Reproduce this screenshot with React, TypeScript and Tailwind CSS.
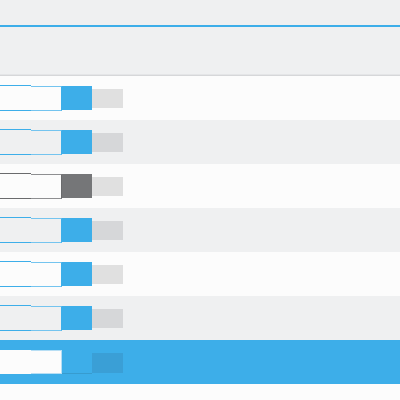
import React from "react";

type RowKind = "normal" | "disabled" | "selected";

const ROWS: RowKind[] = [
  "normal",
  "normal",
  "disabled",
  "normal",
  "normal",
  "normal",
  "selected",
];

function Field({ kind, alt }: { kind: RowKind; alt: boolean }) {
  if (kind === "selected") {
    return (
      <div className="flex items-center">
        <div className="flex h-[24px] w-[62px]">
          <div className="h-full w-[31px] bg-[#fcfcfc]" />
          <div className="h-full w-[31px] border-y border-r border-[#b7def4] bg-[#fcfcfc]" />
        </div>
        <div className="h-[24px] w-[30px] border-b border-[#379ccf] bg-[#3daee9]" />
        <div className="mt-[1px] h-[20px] w-[31px] bg-[#3a9fd6]" />
      </div>
    );
  }

  const dark = kind === "disabled";
  const strong = dark ? "border-[#6a6b6d]" : "border-[#3daee9]";
  const soft = dark ? "border-[#8e8f91]" : "border-[#74c4ef]";
  const block = dark ? "bg-[#757678]" : "bg-[#3daee9]";
  const track = alt ? "bg-[#d6d7d9]" : "bg-[#e0e0e0]";

  return (
    <div className="flex items-center">
      <div className="flex h-[26px] w-[62px]">
        <div className={`h-full w-[31px] border-y ${strong}`} />
        <div className={`h-[25px] w-[31px] self-center border-y border-r ${soft} ${dark ? "border-r-[#6a6b6d]" : "border-r-[#3daee9]"}`} />
      </div>
      <div className={`h-[24px] w-[30px] ${block}`} />
      <div className={`mt-[1px] h-[19px] w-[31px] ${track}`} />
    </div>
  );
}

export default function App() {
  return (
    <div className="h-[400px] w-[400px] overflow-hidden bg-[#fcfcfc] font-['Noto_Sans',sans-serif]">
      {/* header strip */}
      <div className="flex h-[76px] flex-col border-b border-[#d6d7d9] bg-[#eff0f1]">
        <div className="h-[25px]" />
        <div className="h-[2px] bg-[#3daee9]" />
        <div className="flex-1" />
        <div className="h-[1px] bg-[#e4e5e7]" />
      </div>

      {ROWS.map((kind, i) => {
        const alt = i % 2 === 1;
        const bg =
          kind === "selected"
            ? "bg-[#3daee9]"
            : alt
              ? "bg-[#eff0f1]"
              : "bg-[#fcfcfc]";
        return (
          <div key={i} className={`flex h-[44px] items-center ${bg}`}>
            <Field kind={kind} alt={alt} />
          </div>
        );
      })}
    </div>
  );
}
